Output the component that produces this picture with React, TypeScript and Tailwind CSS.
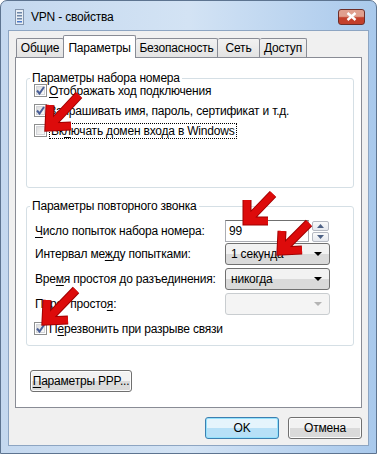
import React from "react";

const font = { fontFamily: '"Liberation Sans", Arial, sans-serif', letterSpacing: "-0.2px" };

function Check({ checked }: { checked: boolean }) {
  return (
    <div className="w-[13px] h-[13px] border border-[#8e8f8f] bg-white flex items-center justify-center shrink-0">
      <div className="w-[9px] h-[9px] border border-[#d2d4d8] bg-gradient-to-br from-[#dcdcdc] to-[#fbfbfb] flex items-center justify-center">
        {checked && (
          <svg width="11" height="11" viewBox="0 0 11 11" className="-m-[2px]">
            <path d="M2 5.5 L4.5 8.5 L9 2" fill="none" stroke="#4a5f97" strokeWidth="2" />
          </svg>
        )}
      </div>
    </div>
  );
}

function U({ children }: { children: React.ReactNode }) {
  return <span className="underline underline-offset-2">{children}</span>;
}

function Combo({ value, disabled }: { value: string; disabled?: boolean }) {
  return (
    <div
      className={
        "w-[105px] h-[22px] rounded-[3px] border flex items-center justify-between pl-[5px] pr-[7px] " +
        (disabled
          ? "border-[#c9cdd0] bg-[#f4f4f4]"
          : "border-[#707070] bg-gradient-to-b from-[#f2f2f2] from-50% to-[#dadada] to-50%")
      }
    >
      <span className="text-[12px] text-black">{value}</span>
      <svg width="8" height="4" viewBox="0 0 8 4">
        <path d="M0 0 H8 L4 4 Z" fill={disabled ? "#b4b4b4" : "#000"} />
      </svg>
    </div>
  );
}

function Arrow({ tip, end, a1, a2 }: { tip: [number, number]; end: [number, number]; a1: [number, number]; a2: [number, number] }) {
  const d = `M${end[0]} ${end[1]} L${tip[0]} ${tip[1]} M${a1[0]} ${a1[1]} L${tip[0]} ${tip[1]} L${a2[0]} ${a2[1]}`;
  return (
    <>
      <path d={d} fill="none" stroke="#a00000" strokeWidth="9" strokeLinejoin="miter" strokeLinecap="butt" />
      <path d={d} fill="none" stroke="#dd0b0b" strokeWidth="7" strokeLinejoin="miter" strokeLinecap="butt" />
    </>
  );
}

function Btn({ children, def, w }: { children: React.ReactNode; def?: boolean; w: string }) {
  return (
    <div
      className={
        w +
        " h-[22px] rounded-[3px] border flex items-center justify-center text-[12px] text-black " +
        (def
          ? "border-[#3c7fb1] bg-gradient-to-b from-[#e5f4fc] from-50% to-[#b7e0f7] to-50% shadow-[inset_0_0_0_1px_#94e2fc]"
          : "border-[#707070] bg-gradient-to-b from-[#f2f2f2] from-50% to-[#dadada] to-50% shadow-[inset_0_0_0_1px_#fcfcfc]")
      }
    >
      {children}
    </div>
  );
}

const tabOff =
  "h-[19px] border border-b-0 border-[#898c95] bg-gradient-to-b from-[#f2f2f2] to-[#e3e3e3] text-[12px] flex items-center justify-center rounded-t-[2px]";

export default function App() {
  return (
    <div style={font} className="relative w-[377px] h-[454px] overflow-hidden bg-white">
      <div className="w-[377px] h-[454px] rounded-t-[7px] border border-[#5d7490] bg-gradient-to-r from-[#c4d8ef] via-[#d3e3f4] to-[#a9c9ec] flex flex-col">
        {/* title bar */}
        <div className="h-[29px] flex items-center pl-[14px] pr-[11px] pt-[3px]">
          <svg width="9" height="16" viewBox="0 0 9 16" className="mr-[7px]">
            <rect x="0.5" y="0.5" width="8" height="15" fill="#e8eef5" stroke="#8395ad" />
            <rect x="2" y="3" width="5" height="1.5" fill="#6d86a8" />
            <rect x="2" y="6" width="5" height="1.5" fill="#6d86a8" />
            <rect x="2" y="9" width="5" height="1.5" fill="#6d86a8" />
            <rect x="2" y="12" width="5" height="1.5" fill="#4a78c8" />
          </svg>
          <span className="text-[12px] text-black flex-1">VPN - свойства</span>
          <div className="w-[27px] h-[16px] -mt-[1px] rounded-[3px] border border-[#6e2e29] bg-gradient-to-b from-[#e0a08f] from-45% to-[#c3402c] to-55% flex items-center justify-center">
            <svg width="11" height="9" viewBox="0 0 11 9">
              <path d="M1.5 1 L9.5 8 M9.5 1 L1.5 8" stroke="#fff" strokeWidth="2.4" />
            </svg>
          </div>
        </div>
        {/* client area */}
        <div className="mx-[7px] h-[416px] border border-[#8da5c2] bg-[#f0f0f0] flex flex-col pl-[6px] pr-[6px]">
          {/* tabs */}
          <div className="h-[26px] flex items-end pl-[1px] relative z-10">
            <div className={tabOff + " w-[48px]"}>Общие</div>
            <div className="h-[23px] w-[73px] -ml-[1px] border border-b-0 border-[#898c95] bg-white text-[12px] flex items-start pt-[3px] justify-center rounded-t-[2px] mb-[-1px]">Параметры</div>
            <div className={tabOff + " w-[82px] border-l-0"}>Безопасность</div>
            <div className={tabOff + " w-[42px] border-l-0"}>Сеть</div>
            <div className={tabOff + " w-[47px] border-l-0"}>Доступ</div>
          </div>
          {/* panel */}
          <div className="h-[351px] border border-[#898c95] bg-white pl-[10px] pr-[7px] pt-[11px] text-[12px] text-black">
            <fieldset className="border border-[#d5dfe5] rounded-[3px] h-[119px] pl-[7px]">
              <legend className="-ml-[4px] px-[2px] text-[12px]">Параметры набора номера</legend>
              <div className="flex flex-col gap-[7px] -mt-[3px]">
                <div className="flex items-center gap-[2px] h-[13px]"><Check checked /><span><U>О</U>тображать ход подключения</span></div>
                <div className="flex items-center gap-[2px] h-[13px]"><Check checked /><span><U>З</U>апрашивать имя, пароль, сертификат и т.д.</span></div>
                <div className="flex items-center gap-[2px] h-[13px]"><Check checked={false} /><span className="border border-dotted border-black px-[1px] leading-[14px]">Вк<U>л</U>ючать домен входа в Windows</span></div>
              </div>
            </fieldset>
            <fieldset className="mt-[9px] border border-[#d5dfe5] rounded-[3px] h-[149px] pl-[8px] pr-[7px] pt-[5px]">
              <legend className="-ml-[5px] px-[2px] text-[12px]">Параметры повторного звонка</legend>
              <div className="flex items-center h-[22px]">
                <span className="w-[190px]"><U>Ч</U>исло попыток набора номера:</span>
                <div className="w-[84px] h-[22px] border border-[#abadb3] border-t-[#707070] bg-white flex items-center pl-[3px]">99</div>
                <div className="ml-[3px] flex flex-col gap-[1px]">
                  {[0, 1].map((i) => (
                    <div key={i} className="w-[17px] h-[10px] rounded-[2px] border border-[#b5b9c2] bg-gradient-to-b from-[#fafafa] to-[#e6e9ef] flex items-center justify-center">
                      <svg width="7" height="4" viewBox="0 0 7 4">
                        <path d={i === 0 ? "M0 4 H7 L3.5 0 Z" : "M0 0 H7 L3.5 4 Z"} fill="#4d6185" />
                      </svg>
                    </div>
                  ))}
                </div>
              </div>
              <div className="flex items-center h-[22px] mt-[1px]">
                <span className="w-[190px]">Интервал ме<U>ж</U>ду попытками:</span>
                <Combo value="1 секунда" />
              </div>
              <div className="flex items-center h-[22px] mt-[3px]">
                <span className="w-[190px]">Вре<U>м</U>я простоя до разъединения:</span>
                <Combo value="никогда" />
              </div>
              <div className="flex items-center h-[22px] mt-[3px]">
                <span className="w-[190px]">Порог просто<U>я</U>:</span>
                <Combo value="" disabled />
              </div>
              <div className="flex items-center gap-[2px] h-[13px] mt-[7px] -ml-[1px]"><Check checked /><span>П<U>е</U>резвонить при разрыве связи</span></div>
            </fieldset>
            <div className="mt-[24px] ml-[4px]">
              <Btn w="w-[102px]"><span><U>П</U>араметры PPP...</span></Btn>
            </div>
          </div>
          {/* bottom buttons */}
          <div className="flex justify-end gap-[9px] mt-[9px]">
            <Btn def w="w-[74px]">OK</Btn>
            <Btn w="w-[74px]">Отмена</Btn>
          </div>
        </div>
      </div>
      <svg className="absolute left-0 top-0 pointer-events-none" width="377" height="454" viewBox="0 0 377 454">
        <Arrow tip={[49, 127]} end={[79, 95]} a1={[50, 105]} a2={[71, 126]} />
        <Arrow tip={[247, 221]} end={[273, 194]} a1={[247, 200]} a2={[268, 221]} />
        <Arrow tip={[281, 251]} end={[309, 223]} a1={[282, 231]} a2={[302, 250]} />
        <Arrow tip={[46, 321]} end={[76, 290]} a1={[47, 300]} a2={[68, 320]} />
      </svg>
    </div>
  );
}
